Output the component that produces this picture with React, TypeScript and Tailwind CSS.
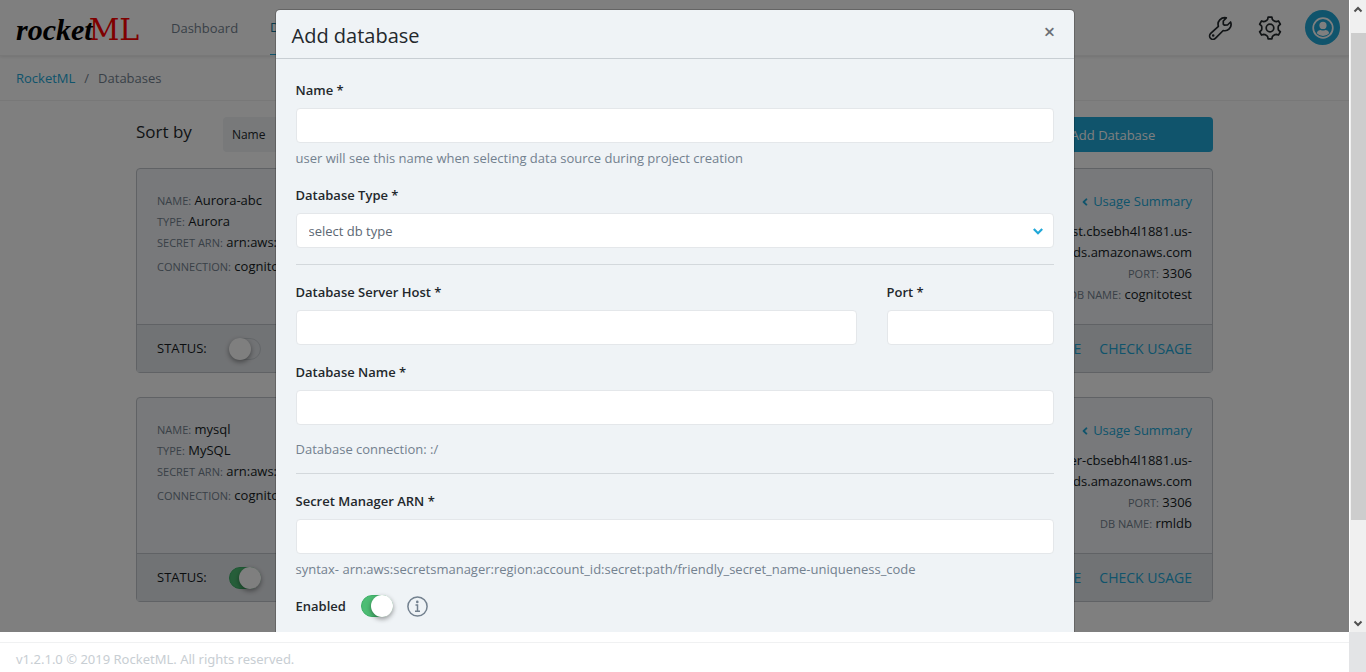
import { FaAngleLeft } from "react-icons/fa";

type Database = {
  name: string;
  type: string;
  arn: string;
  connection: string;
  host: [string, string];
  port: string;
  dbName: string;
  enabled: boolean;
};

const databases: Database[] = [
  {
    name: "Aurora-abc",
    type: "Aurora",
    arn: "arn:aws:secretsmanager",
    connection: "cognitotest",
    host: ["cognitotest.cbsebh4l1881.us-", "east-1.rds.amazonaws.com"],
    port: "3306",
    dbName: "cognitotest",
    enabled: false,
  },
  {
    name: "mysql",
    type: "MySQL",
    arn: "arn:aws:secretsmanager",
    connection: "cognitotest",
    host: ["cluster-cbsebh4l1881.us-", "east-1.rds.amazonaws.com"],
    port: "3306",
    dbName: "rmldb",
    enabled: true,
  },
];

function WrenchIcon() {
  return (
    <svg viewBox="0 0 24 24" className="size-6" fill="none" stroke="currentColor" strokeWidth="1.7" strokeLinejoin="round">
      <path d="M18.300 1.800 15.300 5v3.200l1 1 3.200-.2L22.600 6c1 2.700.3 5.200-1.400 6.900-1.700 1.700-3.900 2.200-6 1.600l-7.600 7.700c-1.500 1.500-3.700 1.500-5 .2-1.400-1.400-1.300-3.600.1-5l7.700-7.100c-.7-2.300-.3-4.700 1.400-6.500 1.700-1.700 4.300-2.500 6.500-2Z" />
      <circle cx="5.200" cy="19.500" r=".7" strokeWidth="1.200" />
    </svg>
  );
}

const gearPoints = [0, 60, 120, 180, 240, 300]
  .flatMap((angle) => [
    [angle - 22, 8.3],
    [angle - 15, 9],
    [angle - 10, 11],
    [angle + 10, 11],
    [angle + 15, 9],
    [angle + 22, 8.3],
  ])
  .map(([deg, r]) => {
    const a = (deg * Math.PI) / 180;
    return `${(12 + r * Math.sin(a)).toFixed(2)},${(12 - r * Math.cos(a)).toFixed(2)}`;
  })
  .join(" ");

function GearIcon() {
  return (
    <svg viewBox="0 0 24 24" className="size-6" fill="none" stroke="currentColor" strokeWidth="1.7" strokeLinejoin="round">
      <polygon points={gearPoints} />
      <circle cx="12" cy="12" r="3.800" />
    </svg>
  );
}

function AvatarIcon() {
  return (
    <svg viewBox="0 0 22 22" className="size-[22px]">
      <circle cx="11" cy="11" r="9.800" fill="none" stroke="currentColor" strokeWidth="1.700" />
      <circle cx="11" cy="8.400" r="3.600" fill="currentColor" />
      <path d="M4.800 16.300c.5-2.300 2-3.300 3.900-3.300 1.500.8 3.100.8 4.600 0 1.900 0 3.400 1 3.900 3.300a8.300 8.300 0 0 1-12.400 0Z" fill="currentColor" />
    </svg>
  );
}

function InfoIcon() {
  return (
    <svg viewBox="0 0 21 21" className="ml-[14px] size-[21px] text-[#73818f]" fill="none" stroke="currentColor" strokeWidth="1.500">
      <circle cx="10.500" cy="10.500" r="9.600" />
      <path d="M8.500 9h2v6.200M8 15.300h5" />
      <circle cx="10.300" cy="5.900" r="1.300" fill="currentColor" stroke="none" />
    </svg>
  );
}

function Toggle({ id, label, defaultChecked }: { id: string; label?: string; defaultChecked: boolean }) {
  return (
    <input
      id={id}
      type="checkbox"
      role="switch"
      aria-label={label}
      defaultChecked={defaultChecked}
      className="h-[22px] w-8 shrink-0 appearance-none rounded-full border border-[#c8ced3] before:-mt-px before:-ml-px before:block before:size-[22px] before:rounded-full before:bg-white before:shadow-[0_2px_5px_rgba(0,0,0,0.4)] checked:border-[#3eaf68] checked:bg-[#4dbd74] checked:before:ml-[9px]"
    />
  );
}

function Field({ label, value }: { label: string; value: string }) {
  return (
    <div className="whitespace-nowrap">
      <span className="text-[11px] text-[#73818f]">{label}:</span> {value}
    </div>
  );
}

function DatabaseCard({ db }: { db: Database }) {
  return (
    <article className="rounded border border-[#c0c5ca] bg-[#f0f3f6] text-[#151b1e]">
      <div className="flex h-[155px] justify-between px-5 pt-[21px]">
        <div>
          <Field label="NAME" value={db.name} />
          <Field label="TYPE" value={db.type} />
          <Field label="SECRET ARN" value={db.arn} />
          <div className="mt-[3px]">
            <Field label="CONNECTION" value={db.connection} />
          </div>
        </div>
        <div className="pt-px text-right">
          <a href="#usage" className="mb-[9px] flex items-center justify-end gap-[2px] text-[#20a8d8]">
            <FaAngleLeft className="size-3" />
            Usage Summary
          </a>
          <div>{db.host[0]}</div>
          <div>{db.host[1]}</div>
          <Field label="PORT" value={db.port} />
          <Field label="DB NAME" value={db.dbName} />
        </div>
      </div>
      <div className="flex h-12 items-center border-t border-[#c0c5ca] bg-[#e3e6ea] px-5">
        <span className="mr-[22px]">STATUS:</span>
        <Toggle id={`status-${db.name}`} label={`${db.name} status`} defaultChecked={db.enabled} />
        <div className="ml-auto flex gap-[18px] text-sm text-[#20a8d8]">
          <a href="#browse">BROWSE</a>
          <a href="#check">CHECK USAGE</a>
        </div>
      </div>
    </article>
  );
}

const labelClass = "mb-[7px] block pt-px font-semibold";
const inputClass = "block h-[35px] w-full rounded border border-[#e4e7ea] bg-white px-3 outline-none";

function TextField({ id, label }: { id: string; label: string }) {
  return (
    <div>
      <label htmlFor={id} className={labelClass}>
        {label} *
      </label>
      <input id={id} type="text" className={inputClass} />
    </div>
  );
}

function AddDatabaseDialog() {
  return (
    <div className="absolute inset-0 flex items-start justify-center overflow-hidden bg-black/50 pt-[9px]">
      <section
        role="dialog"
        aria-labelledby="dialog-title"
        className="w-full max-w-[800px] rounded-[5px] border border-black/20 bg-[#eff3f6] bg-clip-padding"
      >
        <header className="flex h-[49px] items-center justify-between border-b border-[#c8ced3] px-4">
          <h2 id="dialog-title" className="pt-1 text-xl">
            Add database
          </h2>
          <button type="button" aria-label="Close" className="w-4 pb-1 text-center text-xl font-semibold text-[#6b7075]">
            ×
          </button>
        </header>
        <form className="p-5">
          <TextField id="name" label="Name" />
          <p className="mt-[5px] text-[#73818f]">
            user will see this name when selecting data source during project creation
          </p>
          <div className="mt-[15px]">
            <label htmlFor="db-type" className={labelClass}>
              Database Type *
            </label>
            <div className="relative">
              <select id="db-type" className={`${inputClass} appearance-none pt-px text-[#5c6873]`}>
                <option>select db type</option>
              </select>
              <svg
                viewBox="0 0 10 10"
                className="pointer-events-none absolute top-[13px] right-[11px] size-[10px] text-[#20a8d8]"
                fill="none"
                stroke="currentColor"
                strokeWidth="2.200"
              >
                <path d="M.8 3 5 7.200 9.200 3" />
              </svg>
            </div>
          </div>
          <hr className="my-4 border-[#d3d8dc]" />
          <div className="grid grid-cols-12 gap-[30px]">
            <div className="col-span-9">
              <TextField id="host" label="Database Server Host" />
            </div>
            <div className="col-span-3">
              <TextField id="port" label="Port" />
            </div>
          </div>
          <div className="mt-4">
            <TextField id="db-name" label="Database Name" />
          </div>
          <p className="mt-[14px] mb-[13px] text-[#73818f]">Database connection: :/</p>
          <hr className="mb-4 border-[#d3d8dc]" />
          <TextField id="arn" label="Secret Manager ARN" />
          <p className="mt-[5px] text-[#73818f]">
            syntax- arn:aws:secretsmanager:region:account_id:secret:path/friendly_secret_name-uniqueness_code
          </p>
          <div className="mt-[15px] flex items-center">
            <label htmlFor="enabled" className="mr-[15px] pt-px font-semibold">
              Enabled
            </label>
            <Toggle id="enabled" defaultChecked />
            <InfoIcon />
          </div>
        </form>
      </section>
    </div>
  );
}

function Scrollbar() {
  return (
    <div aria-hidden="true" className="flex w-[17px] shrink-0 flex-col items-center justify-between border-l border-white bg-[#f0f0f0]">
      <svg viewBox="0 0 16 33" className="h-[33px] w-4" fill="none" stroke="#505050" strokeWidth="2">
        <path d="M4.500 11.500 8 8l3.500 3.500" />
      </svg>
      <div className="mb-auto h-[77%] w-[15px] bg-[#cdcdcd]" />
      <svg viewBox="0 0 16 17" className="h-[17px] w-4" fill="none" stroke="#505050" strokeWidth="2">
        <path d="M4.500 6.500 8 10l3.500-3.500" />
      </svg>
    </div>
  );
}

export default function App() {
  return (
    <div className="flex h-screen flex-col overflow-hidden bg-white font-['Open_Sans','Noto_Sans',sans-serif] text-[13px] leading-[21px] text-[#23282c]">
      <div className="flex min-h-0 flex-1">
        <div className="relative min-w-0 flex-1 overflow-hidden">
          <nav className="flex h-14 items-center border-b border-[#f0f0f0] px-4 text-[#73818f] shadow-[0_1px_3px_rgba(0,0,0,0.1)]">
            <a href="#home" className="flex w-[124px] items-baseline pt-1 leading-none whitespace-nowrap">
              <span className="font-['Liberation_Serif',cursive] text-[30px] font-bold text-black italic">rocket</span>
              <span className="-ml-1 font-['DejaVu_Serif',serif] text-[30px] text-[#ff0000]">ML</span>
            </a>
            <a href="#dashboard" className="ml-[31px] pt-px">
              Dashboard
            </a>
            <a href="#databases" className="ml-8 flex h-full items-center border-b border-[#20a8d8] pt-px text-[#167495]">
              Databases
            </a>
            <div className="ml-auto flex items-center text-[#23282c]">
              <button type="button" aria-label="Tools">
                <WrenchIcon />
              </button>
              <button type="button" aria-label="Settings" className="ml-[26px]">
                <GearIcon />
              </button>
              <button
                type="button"
                aria-label="Account"
                className="-mr-[7px] ml-[23px] flex size-[35px] items-center justify-center rounded-full bg-[#20a8d8] text-white"
              >
                <AvatarIcon />
              </button>
            </div>
          </nav>
          <div className="flex h-[45px] items-center gap-[9px] border-b border-[#f0f0f0] px-4 text-[#73818f]">
            <a href="#rocketml" className="text-[#20a8d8]">
              RocketML
            </a>
            <span>/</span>
            <span>Databases</span>
          </div>
          <main className="mx-auto max-w-[1077px] pt-4">
            <div className="mb-4 flex h-[35px] items-center">
              <label htmlFor="sort" className="mr-[31px] pb-[6px] text-[17px]">
                Sort by
              </label>
              <select id="sort" className="h-[35px] w-40 appearance-none rounded bg-[#f0f3f5] px-[9px] text-xs">
                <option>Name</option>
              </select>
              <button type="button" className="ml-auto h-[35px] w-[200px] rounded bg-[#20a8d8] pt-px text-white">
                Add Database
              </button>
            </div>
            <div className="flex flex-col gap-6">
              {databases.map((db) => (
                <DatabaseCard key={db.name} db={db} />
              ))}
            </div>
          </main>
          <AddDatabaseDialog />
        </div>
        <Scrollbar />
      </div>
      <div className="flex h-10 shrink-0">
        <footer className="mt-[10px] flex flex-1 items-center border-t border-[#f0f1f2] px-4 pt-1 font-['Noto_Sans',sans-serif] text-[#c8ced3]">
          v1.2.1.0 © 2019 RocketML. All rights reserved.
        </footer>
        <div className="w-[17px] bg-[#e3e4e6]" />
      </div>
    </div>
  );
}
